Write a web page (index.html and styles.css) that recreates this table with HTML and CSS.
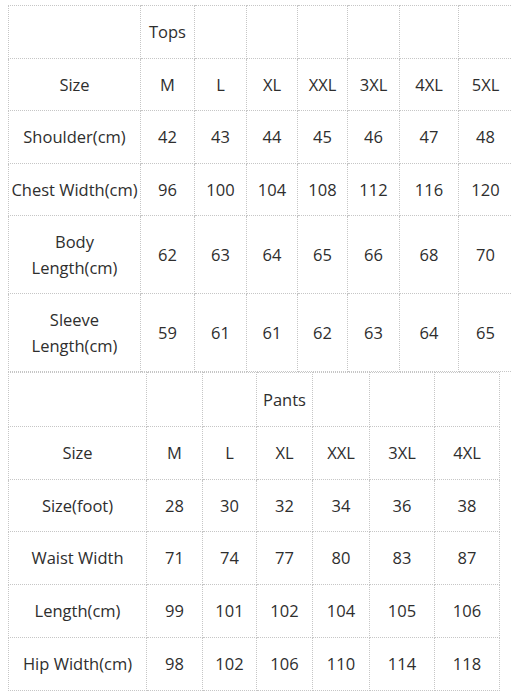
FILE: index.html
```html
<!DOCTYPE html>
<html>
<head>
<meta charset="utf-8">
<link rel="stylesheet" href="styles.css">
</head>
<body>
<div class="page">
<table class="chart tops">
  <colgroup>
    <col class="c-label"><col style="width:54px"><col style="width:52px"><col style="width:51px"><col style="width:50px"><col style="width:52px"><col style="width:59px"><col style="width:54px">
  </colgroup>
  <tr class="r53"><td></td><td>Tops</td><td></td><td></td><td></td><td></td><td></td><td></td></tr>
  <tr class="r52"><td>Size</td><td>M</td><td>L</td><td>XL</td><td>XXL</td><td>3XL</td><td>4XL</td><td>5XL</td></tr>
  <tr class="r53"><td>Shoulder(cm)</td><td>42</td><td>43</td><td>44</td><td>45</td><td>46</td><td>47</td><td>48</td></tr>
  <tr class="r52"><td>Chest Width(cm)</td><td>96</td><td>100</td><td>104</td><td>108</td><td>112</td><td>116</td><td>120</td></tr>
  <tr class="r78"><td>Body<br>Length(cm)</td><td>62</td><td>63</td><td>64</td><td>65</td><td>66</td><td>68</td><td>70</td></tr>
  <tr class="r78"><td>Sleeve<br>Length(cm)</td><td>59</td><td>61</td><td>61</td><td>62</td><td>63</td><td>64</td><td>65</td></tr>
</table>
<table class="chart pants">
  <colgroup>
    <col class="c-label2"><col style="width:56px"><col style="width:54px"><col style="width:56px"><col style="width:57px"><col style="width:65px"><col style="width:65px">
  </colgroup>
  <tr class="r54"><td></td><td></td><td></td><td>Pants</td><td></td><td></td><td></td></tr>
  <tr class="r53"><td>Size</td><td>M</td><td>L</td><td>XL</td><td>XXL</td><td>3XL</td><td>4XL</td></tr>
  <tr class="r52"><td>Size(foot)</td><td>28</td><td>30</td><td>32</td><td>34</td><td>36</td><td>38</td></tr>
  <tr class="r53"><td>Waist Width</td><td>71</td><td>74</td><td>77</td><td>80</td><td>83</td><td>87</td></tr>
  <tr class="r53"><td>Length(cm)</td><td>99</td><td>101</td><td>102</td><td>104</td><td>105</td><td>106</td></tr>
  <tr class="r53"><td>Hip Width(cm)</td><td>98</td><td>102</td><td>106</td><td>110</td><td>114</td><td>118</td></tr>
</table>
</div>
</body>
</html>
```
FILE: styles.css
```css
html, body {
  margin: 0;
  padding: 0;
  background: #ffffff;
  overflow: hidden;
}
.page {
  padding: 5px 0 0 8px;
  width: 520px;
  font-family: "Open Sans", "Noto Sans", sans-serif;
  font-size: 16.5px;
  color: #2e2e2e;
}
.chart {
  border-collapse: collapse;
  table-layout: fixed;
}
.tops { width: 504px; }
.pants { width: 491px; }
.c-label { width: 132px; }
.c-label2 { width: 138px; }
.chart td {
  border: 1px dotted #c6c6c6;
  text-align: center;
  vertical-align: middle;
  padding: 0;
  line-height: 26px;
  white-space: nowrap;
}
.r52 td { height: 51px; }
.r53 td { height: 52px; }
.r54 td { height: 53px; }
.r78 td { height: 77px; }
```
